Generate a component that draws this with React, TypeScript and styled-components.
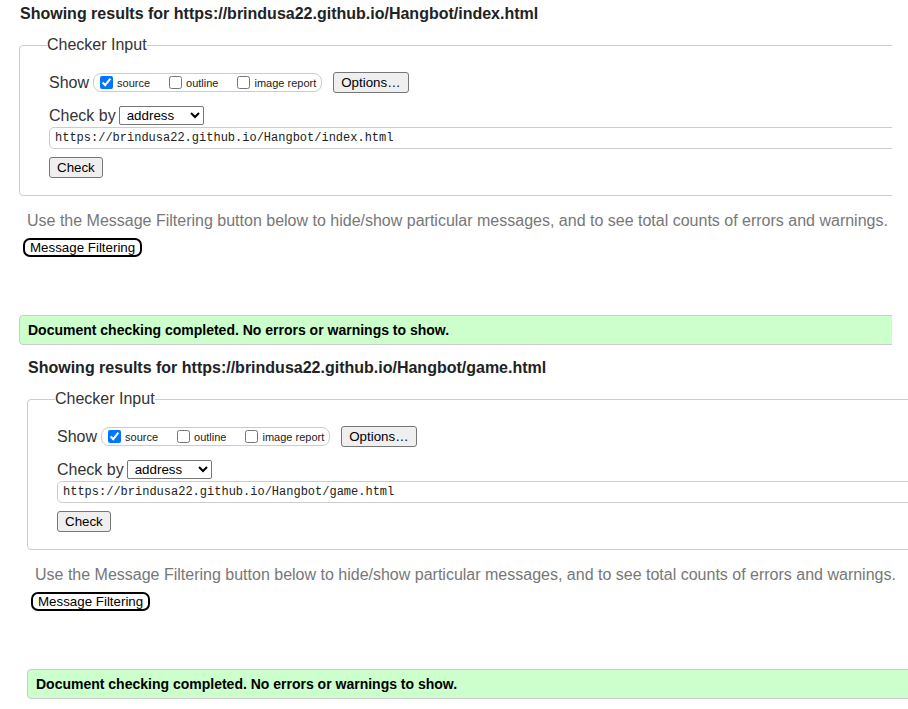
import React from "react";
import styled, { createGlobalStyle } from "styled-components";

const GlobalStyle = createGlobalStyle`
  html, body {
    margin: 0;
    padding: 0;
    background: #ffffff;
    overflow: hidden;
  }
  body {
    font-family: "Liberation Sans", Arial, sans-serif;
    color: #222;
  }
  * { box-sizing: border-box; }
`;

const Page = styled.div`
  display: flex;
  flex-direction: column;
  width: 908px;
`;

const ResultBlock = styled.section<{ $shift: number }>`
  display: flex;
  flex-direction: column;
  align-items: flex-start;
  margin-left: ${(p) => p.$shift}px;
  width: ${(p) => 892 + p.$shift}px;
  height: 354px;
  padding: 5px 0 0 19px;
  overflow: hidden;
`;

const Heading = styled.h2`
  margin: 0;
  padding-left: 1px;
  font-size: 16px;
  line-height: 18px;
  font-weight: 700;
  color: #222;
  white-space: nowrap;
`;

const CheckerFieldset = styled.fieldset`
  margin: 13px 0 0;
  padding: 18px 0 17px 29px;
  width: 940px;
  min-width: 0;
  border: 1px solid #cccccc;
  border-radius: 4px;
  display: flex;
  flex-direction: column;
  align-items: flex-start;
`;

const Legend = styled.legend`
  padding: 0;
  margin-left: -2px;
  font-size: 16px;
  line-height: 18px;
  color: #333;
`;

const Row = styled.div`
  display: flex;
  align-items: center;
  height: 21px;
`;

const CheckByRow = styled(Row)`
  margin-top: 12px;
`;

const FieldLabel = styled.span`
  font-size: 16px;
  line-height: 18px;
  color: #333;
  margin-right: 4px;
  white-space: nowrap;
`;

const OptionGroup = styled.span`
  display: inline-flex;
  align-items: center;
  gap: 19px;
  height: 19px;
  padding: 0 5px 0 6px;
  border: 1px solid #cccccc;
  border-radius: 8px;
`;

const OptionItem = styled.label`
  display: inline-flex;
  align-items: center;
  gap: 4px;
`;

const Checkbox = styled.input`
  margin: 0;
  width: 13px;
  height: 13px;
`;

const OptionText = styled.span`
  font-size: 11px;
  line-height: 13px;
  padding-top: 1px;
  color: #222;
  white-space: nowrap;
`;

const NativeButton = styled.button`
  height: 21px;
  padding: 0 7px;
  font-family: "Liberation Sans", Arial, sans-serif;
  font-size: 13.33px;
  line-height: 15px;
  color: #000;
  background: #efefef;
  border: 1px solid #767676;
  border-radius: 3px;
  white-space: nowrap;
`;

const OptionsButton = styled(NativeButton)`
  margin-left: 11px;
`;

const CheckButton = styled(NativeButton)`
  margin-top: 8px;
`;

const Select = styled.select`
  margin-left: -1px;
  width: 85px;
  height: 19px;
  padding: 0 0 0 3px;
  font-family: "Liberation Sans", Arial, sans-serif;
  font-size: 13.33px;
  color: #000;
  background: #fff;
  border: 1px solid #767676;
  border-radius: 2px;
`;

const UrlInput = styled.input`
  margin-top: 1px;
  width: 100%;
  height: 22px;
  padding: 0 5px;
  font-family: "Liberation Mono", "DejaVu Sans Mono", monospace;
  font-size: 12px;
  color: #222;
  background: #fff;
  border: 1px solid #cccccc;
  border-radius: 5px 0 0 5px;
  outline: none;
`;

const Note = styled.p`
  margin: 16px 0 0 8px;
  font-size: 16px;
  line-height: 18px;
  color: #777;
  white-space: nowrap;
`;

const FilterButton = styled.button`
  margin: 8px 0 0 4px;
  height: 19px;
  padding: 0 5px;
  font-family: "Liberation Sans", Arial, sans-serif;
  font-size: 13.33px;
  line-height: 15px;
  color: #000;
  background: #fff;
  border: 2px solid #000;
  border-radius: 7px;
  white-space: nowrap;
`;

const ResultBar = styled.div`
  margin-top: 58px;
  width: 940px;
  height: 30px;
  display: flex;
  align-items: center;
  padding-left: 8px;
  background: #ccffcc;
  border: 1px solid #cccccc;
  border-radius: 4px 0 0 4px;
  font-size: 14px;
  line-height: 16px;
  font-weight: 700;
  color: #000;
  white-space: nowrap;
`;

type Result = { url: string; shift: number };

const results: Result[] = [
  { url: "https://brindusa22.github.io/Hangbot/index.html", shift: 0 },
  { url: "https://brindusa22.github.io/Hangbot/game.html", shift: 8 },
];

function ResultSection({ url, shift }: Result) {
  return (
    <ResultBlock $shift={shift}>
      <Heading>Showing results for {url}</Heading>
      <CheckerFieldset>
        <Legend>Checker Input</Legend>
        <Row>
          <FieldLabel>Show</FieldLabel>
          <OptionGroup>
            <OptionItem>
              <Checkbox type="checkbox" defaultChecked />
              <OptionText>source</OptionText>
            </OptionItem>
            <OptionItem>
              <Checkbox type="checkbox" />
              <OptionText>outline</OptionText>
            </OptionItem>
            <OptionItem>
              <Checkbox type="checkbox" />
              <OptionText>image report</OptionText>
            </OptionItem>
          </OptionGroup>
          <OptionsButton type="button">Options…</OptionsButton>
        </Row>
        <CheckByRow>
          <FieldLabel as="label">Check by</FieldLabel>
          <Select defaultValue="address">
            <option value="address">address</option>
            <option value="upload">file upload</option>
            <option value="input">text input</option>
          </Select>
        </CheckByRow>
        <UrlInput type="url" defaultValue={url} readOnly />
        <CheckButton type="button">Check</CheckButton>
      </CheckerFieldset>
      <Note>
        Use the Message Filtering button below to hide/show particular messages, and to see total counts of errors and warnings.
      </Note>
      <FilterButton type="button">Message Filtering</FilterButton>
      <ResultBar>Document checking completed. No errors or warnings to show.</ResultBar>
    </ResultBlock>
  );
}

export default function App() {
  return (
    <>
      <GlobalStyle />
      <Page>
        {results.map((r) => (
          <ResultSection key={r.url} {...r} />
        ))}
      </Page>
    </>
  );
}
